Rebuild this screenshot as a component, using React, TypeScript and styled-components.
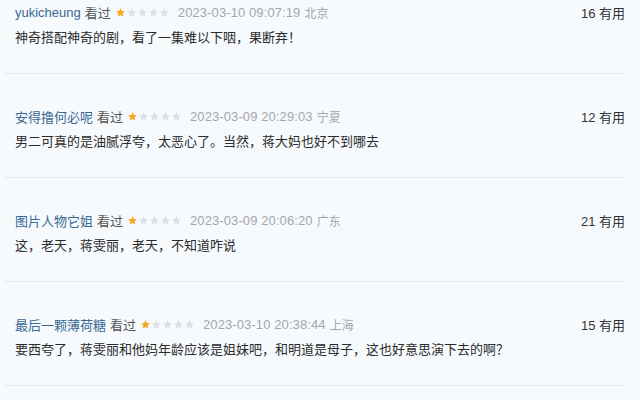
import React from "react";
import styled, { createGlobalStyle } from "styled-components";

interface Review {
    name: string;
    rating: number;
    time: string;
    place: string;
    votes: number;
    text: string;
}

const reviews: Review[] = [
    {
        name: "yukicheung",
        rating: 1,
        time: "2023-03-10 09:07:19",
        place: "北京",
        votes: 16,
        text: "神奇搭配神奇的剧，看了一集难以下咽，果断弃！",
    },
    {
        name: "安得撸何必呢",
        rating: 1,
        time: "2023-03-09 20:29:03",
        place: "宁夏",
        votes: 12,
        text: "男二可真的是油腻浮夸，太恶心了。当然，蒋大妈也好不到哪去",
    },
    {
        name: "图片人物它姐",
        rating: 1,
        time: "2023-03-09 20:06:20",
        place: "广东",
        votes: 21,
        text: "这，老天，蒋雯丽，老天，不知道咋说",
    },
    {
        name: "最后一颗薄荷糖",
        rating: 1,
        time: "2023-03-10 20:38:44",
        place: "上海",
        votes: 15,
        text: "要西夸了，蒋雯丽和他妈年龄应该是姐妹吧，和明道是母子，这也好意思演下去的啊？",
    },
];

const GlobalStyle = createGlobalStyle`
    html, body {
        margin: 0;
        padding: 0;
        background: #f7fafd;
    }
    body {
        font-family: "Liberation Sans", "Noto Sans CJK SC", sans-serif;
    }
`;

const Page = styled.div`
    width: 640px;
    height: 400px;
    overflow: hidden;
    background: #f7fafd;
    padding: 0 15px 0 5px;
    box-sizing: border-box;
`;

const Item = styled.div`
    padding: 32px 0 25px 10px;
    border-bottom: 1px solid #e4e8ed;

    &:first-child {
        padding-top: 2px;
    }
`;

const Header = styled.div`
    display: flex;
    align-items: center;
    height: 20px;
    font-size: 13px;
`;

const Name = styled.span`
    color: #3a6894;
`;

const Status = styled.span`
    color: #555;
    margin-left: 4px;
`;

const Stars = styled.span`
    display: inline-flex;
    margin: 0 8px 0 4px;
`;

const Time = styled.span`
    color: #a3a7ad;
    font-size: 13px;
    letter-spacing: 0.1px;
`;

const Place = styled.span`
    color: #a3a7ad;
    font-size: 12px;
    margin-left: 4px;
`;

const Votes = styled.span`
    margin-left: auto;
    color: #333;
    font-size: 13px;
`;

const Comment = styled.p`
    margin: 6px 0 0;
    line-height: 20px;
    font-size: 13px;
    color: #2b2b2b;
`;

const Star = ({ on }: { on: boolean }) => (
    <svg width="11" height="11" viewBox="0 0 24 24">
        <path
            d="M12 2l2.9 6.6 7.1.6-5.4 4.7 1.6 7-6.2-3.7-6.2 3.7 1.6-7L2 9.2l7.1-.6z"
            fill={on ? "#f5a623" : "#dcdfe4"}
        />
    </svg>
);

const App: React.FC = () => {
    return (
        <Page>
            <GlobalStyle />
            {reviews.map((r) => (
                <Item key={r.name}>
                    <Header>
                        <Name>{r.name}</Name>
                        <Status>看过</Status>
                        <Stars>
                            {[0, 1, 2, 3, 4].map((i) => (
                                <Star key={i} on={i < r.rating} />
                            ))}
                        </Stars>
                        <Time>{r.time}</Time>
                        <Place>{r.place}</Place>
                        <Votes>{r.votes} 有用</Votes>
                    </Header>
                    <Comment>{r.text}</Comment>
                </Item>
            ))}
        </Page>
    );
};

export default App;
